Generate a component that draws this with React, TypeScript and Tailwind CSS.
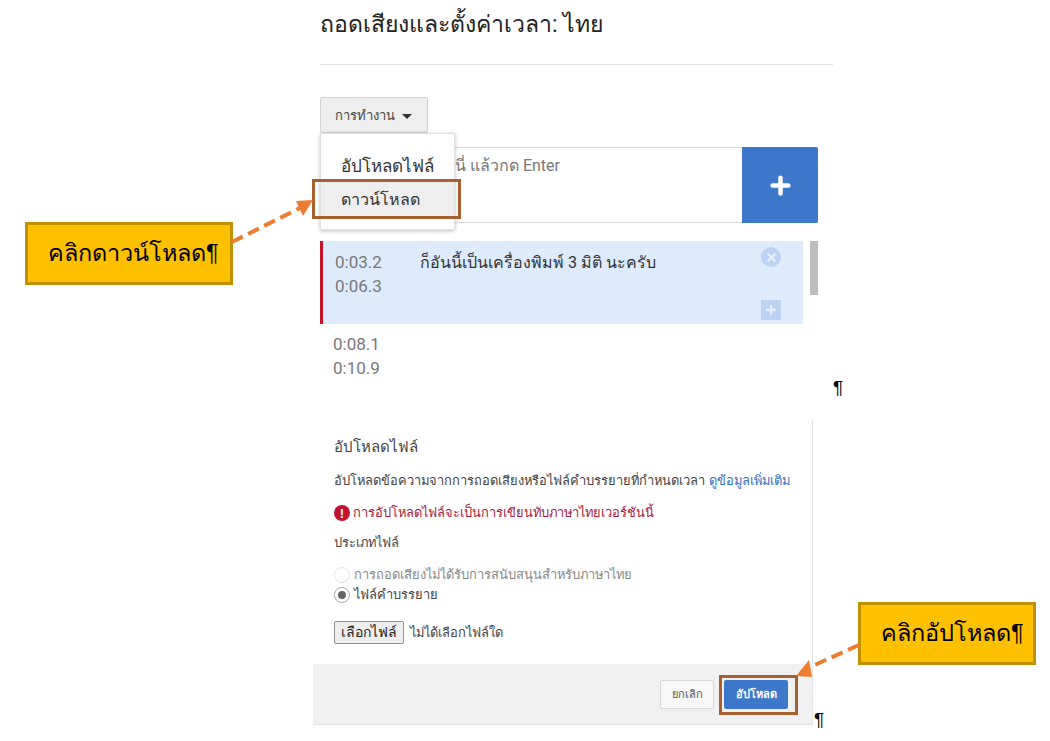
import { Plus, X } from "lucide-react";

const ROBOTO = "font-['Roboto','Noto_Sans','Liberation_Sans',sans-serif]";
const ARIAL = "font-['Liberation_Sans','Noto_Sans',sans-serif]";

function Callout({ text, className }: { text: string; className: string }) {
  return (
    <div
      className={`absolute flex items-center bg-[#ffc000] border-[3px] border-[#bf9000] text-[23.5px] leading-none text-black ${ARIAL} ${className}`}
    >
      {text}
    </div>
  );
}

function EditorPart() {
  return (
    <div className={`pl-[320px] ${ROBOTO}`}>
      <h1 className="w-[513px] h-[65px] pt-[9px] border-b border-[#e3e3e3] text-[23px] leading-[32px] text-[#222]">
        ถอดเสียงและตั้งค่าเวลา: ไทย
      </h1>

      <div className="mt-[32px] w-[108px] h-[36px] flex items-center gap-[7px] pl-[14px] pt-[2px] bg-[#eeeeee] border border-[#d3d3d3] rounded-[2px] text-[13px] text-[#444]">
        การทำงาน
        <span className="w-0 h-0 border-x-[5px] border-x-transparent border-t-[5px] border-t-[#333]" />
      </div>

      {/* caption input */}
      <div className="mt-[14px] w-[498px] h-[76px] flex border-y border-[#d8d8d8]">
        <div className="flex-1 pl-[135px] pt-[6px] text-[16px] leading-[24px] text-[#777]">
          นี่ แล้วกด Enter
        </div>
        <div className="w-[76px] -my-px flex items-center justify-center bg-[#3d77c9] rounded-r-[2px]">
          <Plus size={27} strokeWidth={4} className="text-white" />
        </div>
      </div>

      {/* caption list */}
      <div className="mt-[18px] w-[498px] flex items-start">
        <div className="w-[483px]">
          <div className="h-[83px] flex bg-[#deebfc] border-l-[3px] border-[#c4162a] pl-[12px] pt-[10px]">
            <div className="w-[85px] -mt-px text-[17px] leading-[24px] text-[#777]">
              <div>0:03.2</div>
              <div>0:06.3</div>
            </div>
            <div className="flex-1 text-[16px] leading-[24px] text-[#333]">
              ก็อันนี้เป็นเครื่องพิมพ์ 3 มิติ นะครับ
            </div>
            <div className="w-[42px] -mt-[4px] flex flex-col">
              <span className="w-[20px] h-[20px] rounded-full bg-[#bcd3f3] flex items-center justify-center">
                <X size={13} strokeWidth={4} className="text-[#e6effc]" />
              </span>
              <span className="mt-[33px] w-[20px] h-[20px] bg-[#bcd3f3] flex items-center justify-center">
                <Plus size={14} strokeWidth={4} className="text-[#e6effc]" />
              </span>
            </div>
          </div>
          <div className="pl-[13px] pt-[8px] text-[17px] leading-[24px] text-[#777]">
            <div>0:08.1</div>
            <div>0:10.9</div>
          </div>
        </div>
        <div className="ml-[7px] w-[8px] h-[54px] bg-[#bdbdbd]" />
      </div>
    </div>
  );
}

function UploadPart() {
  return (
    <div className={`mt-[40px] ml-[313px] w-[500px] h-[305px] flex flex-col border-r border-[#e3e3e3] ${ARIAL}`}>
      <div className="flex-1 pl-[21px] text-[12.9px] text-[#444]">
        <div className="mt-[17px] text-[15px] leading-[20px]">อัปโหลดไฟล์</div>
        <div className="mt-[14px] leading-[20px]">
          อัปโหลดข้อความจากการถอดเสียงหรือไฟล์คำบรรยายที่กำหนดเวลา{" "}
          <span className="text-[#2f6fc0]">ดูข้อมูลเพิ่มเติม</span>
        </div>
        <div className="mt-[12px] flex items-center gap-[3px] leading-[20px] text-[#a8203f]">
          <span className="w-[16px] h-[16px] rounded-full bg-[#c4122f] flex items-center justify-center text-white text-[13px] font-bold leading-none">
            !
          </span>
          การอัปโหลดไฟล์จะเป็นการเขียนทับภาษาไทยเวอร์ชันนี้
        </div>
        <div className="mt-[10px] leading-[20px]">ประเภทไฟล์</div>
        <div className="mt-[12px] flex items-center gap-[4px] leading-[20px] text-[#888]">
          <span className="w-[16px] h-[16px] rounded-full border border-[#e2e2e2]" />
          การถอดเสียงไม่ได้รับการสนับสนุนสำหรับภาษาไทย
        </div>
        <div className="flex items-center gap-[4px] leading-[20px]">
          <span className="w-[16px] h-[16px] rounded-full border border-[#aaa] flex items-center justify-center">
            <span className="w-[8px] h-[8px] rounded-full bg-[#666]" />
          </span>
          ไฟล์คำบรรยาย
        </div>
        <div className="mt-[16px] flex items-center gap-[6px]">
          <span className="w-[70px] h-[23px] flex items-center justify-center bg-[#eeeeee] border border-[#8f8f8f] rounded-[2px] text-[14px] text-[#222]">
            เลือกไฟล์
          </span>
          ไม่ได้เลือกไฟล์ใด
        </div>
      </div>
      <div className="h-[61px] flex items-center justify-end gap-[10px] pr-[24px] bg-[#f1f1f1] border-b border-[#e3e3e3]">
        <span className="w-[54px] h-[29px] flex items-center justify-center bg-[#f8f8f8] border border-[#d8d8d8] rounded-[2px] text-[11px] text-[#555]">
          ยกเลิก
        </span>
        <span className="w-[64px] h-[29px] flex items-center justify-center bg-[#3d77c9] rounded-[2px] text-[11px] font-bold text-white">
          อัปโหลด
        </span>
      </div>
    </div>
  );
}

export default function App() {
  return (
    <div className="relative w-[1050px] h-[741px] overflow-hidden bg-white">
      <EditorPart />
      <UploadPart />

      {/* action dropdown */}
      <div className={`absolute left-[320px] top-[133px] w-[135px] h-[97px] bg-white border border-[#e2e2e2] shadow-[0_1px_4px_rgba(0,0,0,0.25)] pt-[20px] text-[16px] leading-[24px] text-[#333] ${ROBOTO}`}>
        <div className="pl-[20px] text-[17px]">อัปโหลดไฟล์</div>
        <div className="mt-[3px] h-[37px] pl-[20px] pt-[7px] bg-[#eeeeee]">ดาวน์โหลด</div>
      </div>

      {/* highlight frames */}
      <div className="absolute left-[312px] top-[179px] w-[149px] h-[40px] border-[3px] border-[#aa5f2e]" />
      <div className="absolute left-[719px] top-[675px] w-[79px] h-[40px] border-[3px] border-[#aa5f2e]" />

      <Callout text="คลิกดาวน์โหลด¶" className="left-[25px] top-[222px] w-[208px] h-[63px] pl-[20px]" />
      <Callout text="คลิกอัปโหลด¶" className="left-[858px] top-[602px] w-[178px] h-[63px] pl-[20px]" />

      {/* arrows */}
      <svg className="absolute left-0 top-0 pointer-events-none" width="1050" height="741" fill="none">
        <path d="M232 242 L300 208" stroke="#ed7d31" strokeWidth="4" strokeDasharray="12 6" />
        <path d="M296 201 L313 200 L303 216 Z" fill="#ed7d31" />
        <path d="M859 645 L808 668" stroke="#ed7d31" strokeWidth="4" strokeDasharray="12 6" />
        <path d="M796 676 L809 660 L812 677 Z" fill="#ed7d31" />
      </svg>

      {/* stray paragraph marks */}
      <span className={`absolute left-[833px] top-[376px] text-[19px] leading-[24px] text-black ${ARIAL}`}>¶</span>
      <span className={`absolute left-[814px] top-[708px] text-[19px] leading-[24px] text-black ${ARIAL}`}>¶</span>
    </div>
  );
}
